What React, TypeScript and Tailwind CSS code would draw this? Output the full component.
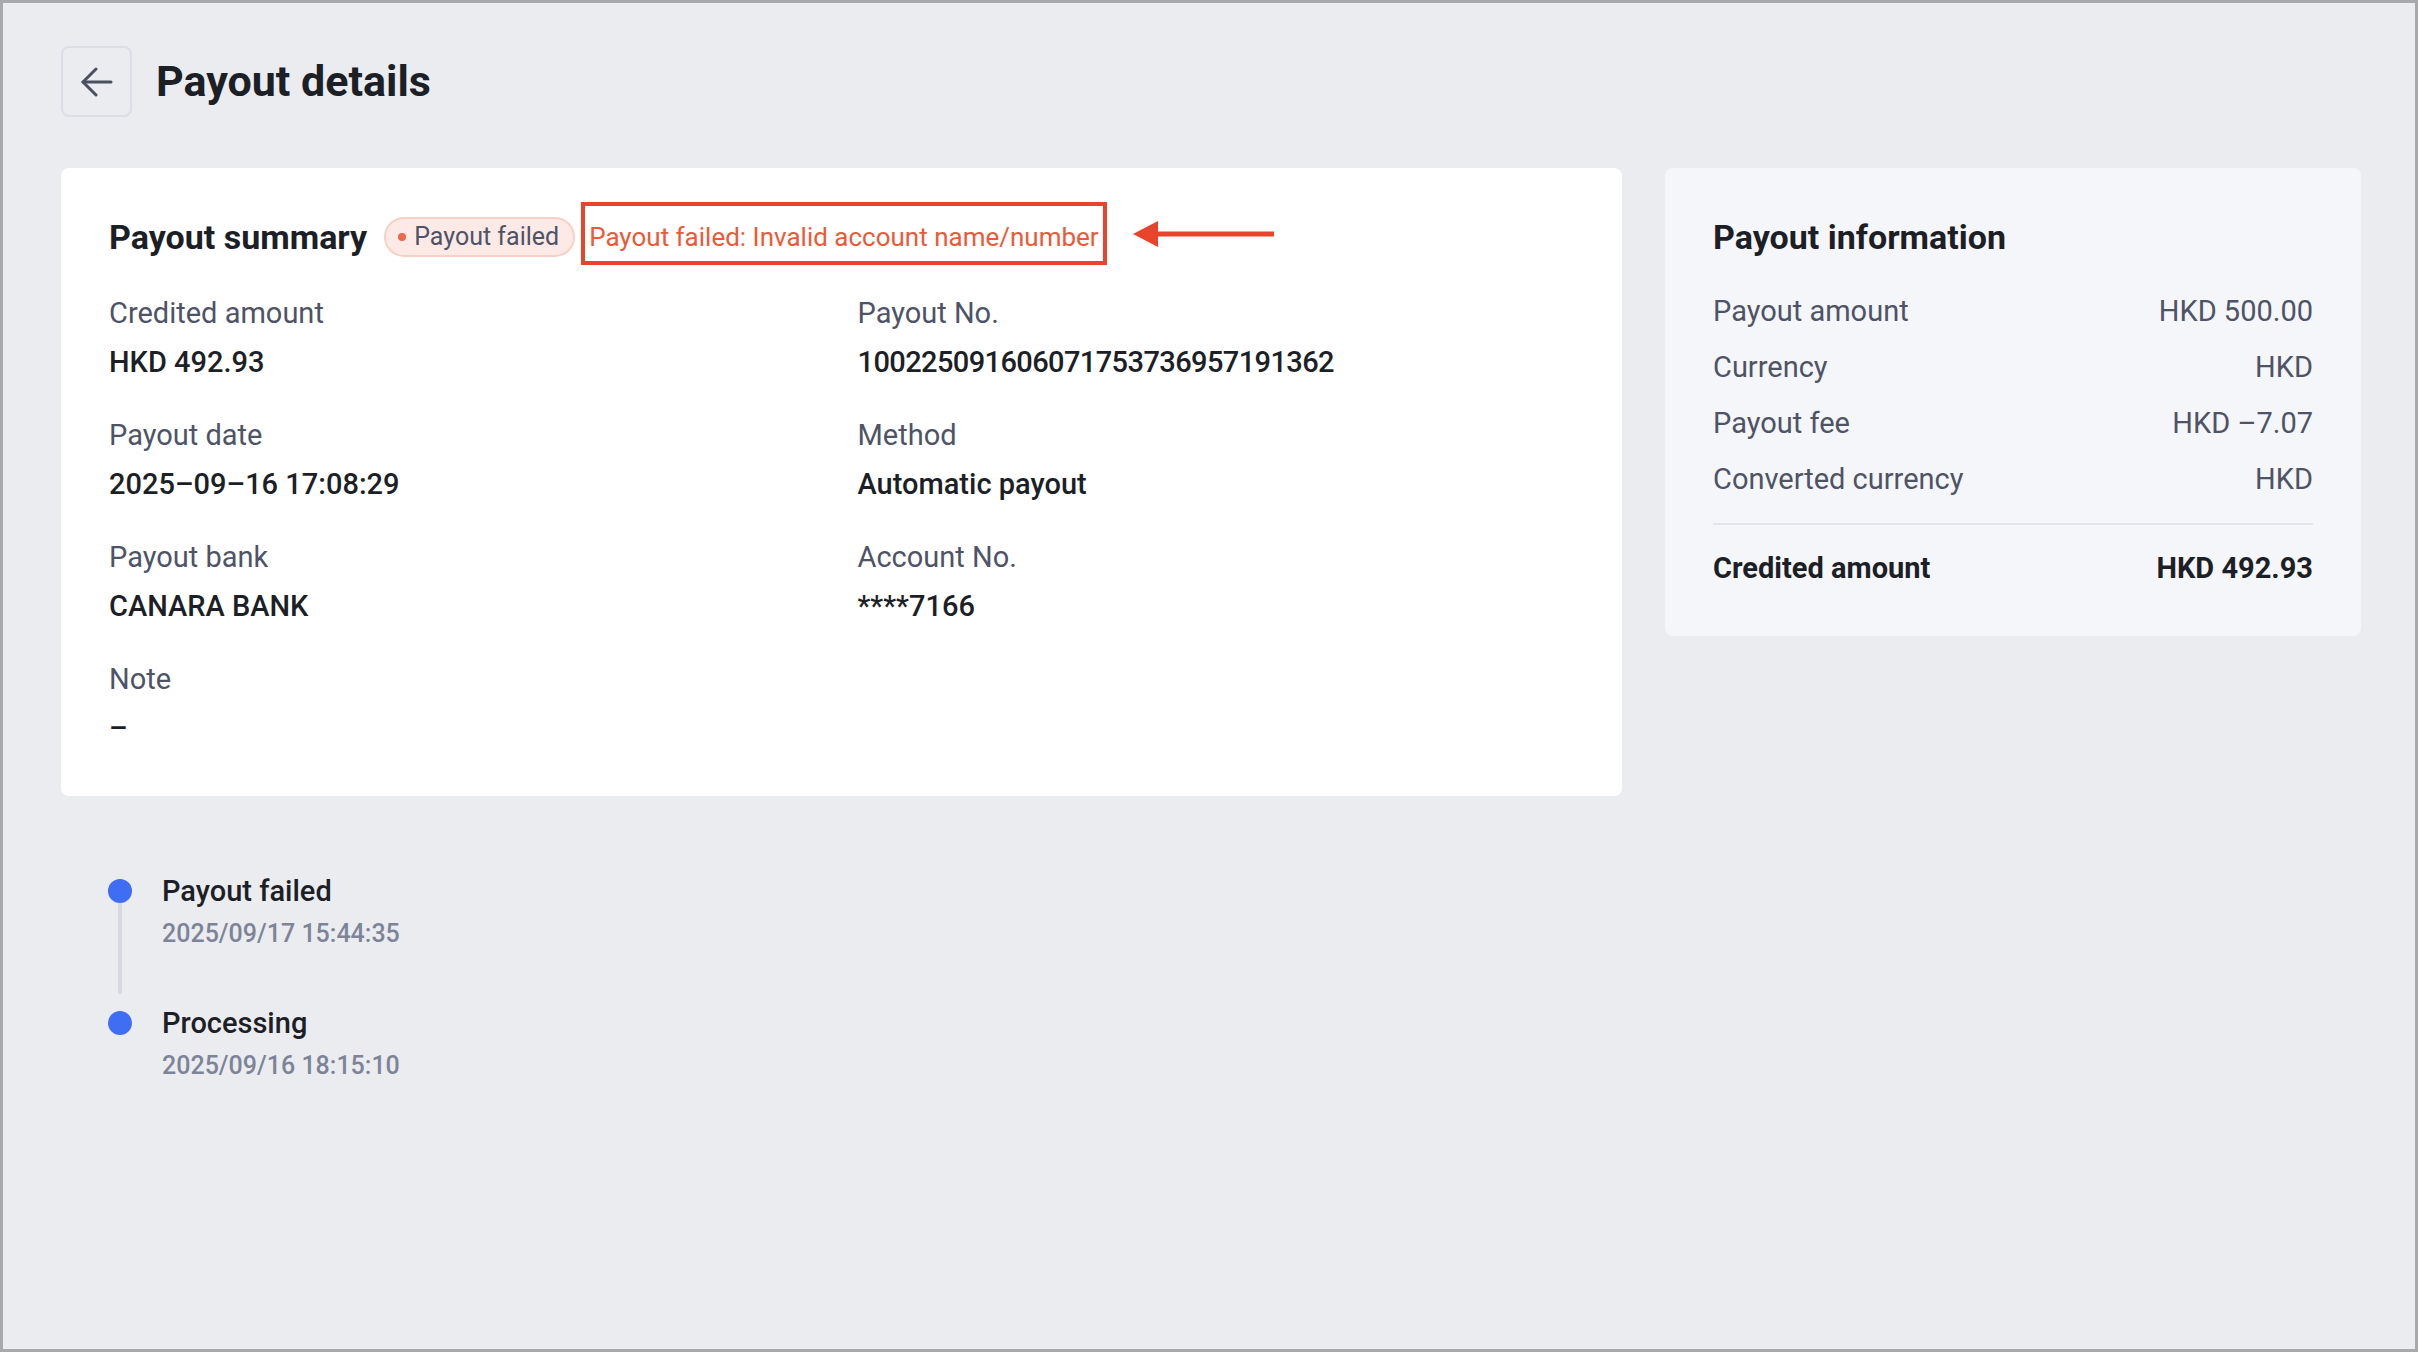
import React from 'react';

interface Field {
  label: string;
  value: string;
  tight?: boolean;
}

interface TimelineEvent {
  title: string;
  time: string;
}

const summaryFields: Field[] = [
  { label: 'Credited amount', value: 'HKD 492.93' },
  { label: 'Payout No.', value: '100225091606071753736957191362', tight: true },
  { label: 'Payout date', value: '2025–09–16 17:08:29' },
  { label: 'Method', value: 'Automatic payout' },
  { label: 'Payout bank', value: 'CANARA BANK' },
  { label: 'Account No.', value: '****7166' },
  { label: 'Note', value: '–' },
];

const infoRows: Field[] = [
  { label: 'Payout amount', value: 'HKD 500.00' },
  { label: 'Currency', value: 'HKD' },
  { label: 'Payout fee', value: 'HKD –7.07' },
  { label: 'Converted currency', value: 'HKD' },
];

const events: TimelineEvent[] = [
  { title: 'Payout failed', time: '2025/09/17 15:44:35' },
  { title: 'Processing', time: '2025/09/16 18:15:10' },
];

export default function App() {
  return (
    <div className="h-[1352px] border-[3px] border-[#a8a9ad] bg-[#ebecf0] pl-[58px] pr-[54px] pt-[43px] font-['Roboto','Liberation_Sans',sans-serif] text-[#1d1f26]">
      {/* Header */}
      <div className="flex items-center gap-[24px]">
        <button className="flex h-[71px] w-[71px] items-center justify-center rounded-[8px] border-2 border-[#dcdde6]">
          <svg width="34" height="30" viewBox="0 0 34 30" fill="none" stroke="#4b5060" strokeWidth="3" strokeLinecap="round" strokeLinejoin="round">
            <path d="M31 15H3" />
            <path d="M16 2L3 15l13 13" />
          </svg>
        </button>
        <h1 className="text-[43px] font-bold leading-none">Payout details</h1>
      </div>

      <div className="mt-[51px] flex items-start gap-[43px]">
        {/* Payout summary */}
        <div className="flex-1 rounded-[8px] bg-white px-[48px] pt-[34px] pb-[48px]">
          <div className="flex items-center">
            <h2 className="text-[34px] font-bold leading-[40px]">Payout summary</h2>
            <span className="ml-[17px] flex h-[40px] items-center gap-[8px] rounded-full border-2 border-[#f8d0c6] bg-[#fde9e5] pl-[12px] pr-[14px] text-[25px] text-[#4e5366]">
              <span className="h-[8px] w-[8px] rounded-full bg-[#ea6a4a]" />
              Payout failed
            </span>
            <span className="mb-[7px] ml-[6px] flex h-[63px] items-center border-4 border-[#e8432b] px-[4px] pt-[8px] text-[26px] text-[#ea5a38]">
              Payout failed: Invalid account name/number
            </span>
            <svg className="mb-[7px] ml-[26px]" width="142" height="28" viewBox="0 0 142 28">
              <path d="M0 14L25 1v26z" fill="#e8432b" />
              <path d="M22 14H141" stroke="#e8432b" strokeWidth="5" />
            </svg>
          </div>

          <div className="mt-[21px] grid grid-cols-2 gap-x-[32px] gap-y-[33px]">
            {summaryFields.map((f) => (
              <div key={f.label} className="flex flex-col gap-[9px]">
                <span className="text-[29px] leading-[40px] text-[#4e5366]">{f.label}</span>
                <span className={`text-[29px] font-medium leading-[40px] text-[#1d1f26] ${f.tight ? 'tracking-[-0.6px]' : ''}`}>{f.value}</span>
              </div>
            ))}
          </div>
        </div>

        {/* Payout information */}
        <div className="w-[696px] rounded-[8px] bg-[#f5f6fa] px-[48px] pt-[49px] pb-[48px]">
          <h2 className="text-[34px] font-bold leading-[40px]">Payout information</h2>
          <div className="mt-[34px] flex flex-col gap-[16px]">
            {infoRows.map((r) => (
              <div key={r.label} className="flex items-center justify-between text-[29px] leading-[40px] text-[#4e5366]">
                <span>{r.label}</span>
                <span>{r.value}</span>
              </div>
            ))}
          </div>
          <div className="mt-[24px] h-[2px] bg-[#e4e5eb]" />
          <div className="mt-[23px] flex items-center justify-between text-[29px] font-bold leading-[40px] text-[#1d1f26]">
            <span>Credited amount</span>
            <span>HKD 492.93</span>
          </div>
        </div>
      </div>

      {/* Timeline */}
      <div className="ml-[47px] mt-[75px]">
        {events.map((e, i) => (
          <div key={e.title} className="flex gap-[30px]">
            <div className="flex w-[24px] flex-col items-center">
              <div className="mt-[8px] h-[24px] w-[24px] shrink-0 rounded-full bg-[#3f6df3]" />
              {i < events.length - 1 && <div className="mb-[9px] w-[4px] flex-1 bg-[#d8d9e4]" />}
            </div>
            <div className={i < events.length - 1 ? 'pb-[52px]' : ''}>
              <div className="text-[29px] font-medium leading-[40px] text-[#1d1f26]">{e.title}</div>
              <div className="mt-[6px] text-[25px] font-medium leading-[34px] text-[#7d8498]">{e.time}</div>
            </div>
          </div>
        ))}
      </div>
    </div>
  );
}
